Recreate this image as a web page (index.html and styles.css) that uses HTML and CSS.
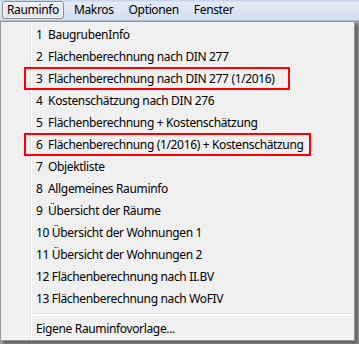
FILE: index.html
```html
<!DOCTYPE html>
<html lang="de">
<head>
<meta charset="UTF-8">
<title>Rauminfo</title>
<link rel="stylesheet" href="styles.css">
</head>
<body>
<div class="menubar">
    <span class="menubar-item open">Rauminfo</span>
    <span class="menubar-item">Makros</span>
    <span class="menubar-item">Optionen</span>
    <span class="menubar-item">Fenster</span>
</div>
<div class="dropdown">
    <div class="item">1  BaugrubenInfo</div>
    <div class="item">2  Flächenberechnung nach DIN 277</div>
    <div class="item marked mark-short">3  Flächenberechnung nach DIN 277 (1/2016)</div>
    <div class="item">4  Kostenschätzung nach DIN 276</div>
    <div class="item">5  Flächenberechnung + Kostenschätzung</div>
    <div class="item marked mark-long">6  Flächenberechnung (1/2016) + Kostenschätzung</div>
    <div class="item">7  Objektliste</div>
    <div class="item">8  Allgemeines Rauminfo</div>
    <div class="item">9  Übersicht der Räume</div>
    <div class="item">10 Übersicht der Wohnungen 1</div>
    <div class="item">11 Übersicht der Wohnungen 2</div>
    <div class="item">12 Flächenberechnung nach II.BV</div>
    <div class="item">13 Flächenberechnung nach WoFIV</div>
    <div class="separator"></div>
    <div class="item">Eigene Rauminfovorlage...</div>
</div>
</body>
</html>
```

FILE: styles.css
```css
body {
    margin: 0;
    width: 359px;
    height: 344px;
    overflow: hidden;
    position: relative;
    background: #9c9c9c;
    font-family: 'Noto Sans', 'Open Sans', sans-serif;
    font-size: 12px;
    letter-spacing: -0.35px;
    color: #000;
}
.menubar {
    height: 20px;
    display: flex;
    align-items: center;
    gap: 5px;
    padding-left: 2px;
    background: linear-gradient(#c9d6ea 0, #c9d6ea 1px, #e4ebf6 2px, #dae3f1 60%, #d3ddee 100%);
    border-bottom: 1px solid #b3bfd1;
}
.menubar-item {
    padding: 0 4px 0 4px;
    height: 18px;
    line-height: 16px;
    box-sizing: border-box;
    border: 1px solid transparent;
}
.menubar-item.open {
    border-color: #8c8e92;
    border-radius: 3px;
    background: linear-gradient(#eef1f6, #dfe4ec);
    box-shadow: inset 0 0 0 1px rgba(255,255,255,0.6);
}
.dropdown {
    position: absolute;
    left: 0;
    top: 21px;
    width: 355px;
    box-sizing: border-box;
    padding: 2px 1px 0 1px;
    border: 1px solid #979797;
    background: #f0f0f0 linear-gradient(90deg, transparent 29px, #e2e3e3 29px, #e2e3e3 30px, #fff 30px, #fff 31px, transparent 31px);
    box-shadow: 3px 3px 2px rgba(0,0,0,0.35);
}
.item {
    position: relative;
    height: 22px;
    line-height: 22px;
    padding-left: 34px;
    white-space: pre;
}
.marked::after {
    content: "";
    position: absolute;
    left: 22px;
    top: -1px;
    height: 19px;
    border: 2px solid #ff0000;
}
.mark-short::after {
    width: 262px;
}
.mark-long::after {
    width: 283px;
}
.separator {
    height: 8px;
    margin-left: 31px;
    margin-right: 1px;
    background: linear-gradient(transparent 3px, #e2e3e3 3px, #e2e3e3 4px, #fff 4px, #fff 5px, transparent 5px);
}
```
